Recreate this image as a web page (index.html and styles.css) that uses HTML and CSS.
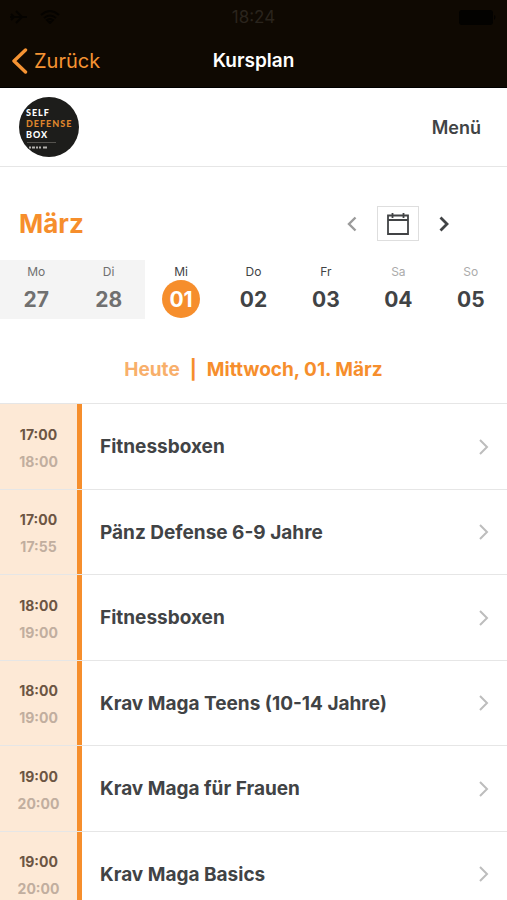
FILE: index.html
```html
<!DOCTYPE html>
<html lang="de">
<head>
<meta charset="utf-8">
<meta name="viewport" content="width=device-width, initial-scale=1">
<title>Kursplan</title>
<link rel="stylesheet" href="styles.css">
</head>
<body>
<div class="app">
  <header class="topbar">
    <div class="status">
      <div class="status-left">
        <svg width="18" height="14" viewBox="0 0 18 14" aria-hidden="true"><path d="M0 7h17M6 1l6 6-6 6M1 4l3 3-3 3" fill="none" stroke="currentColor" stroke-width="2"/></svg>
        <svg width="20" height="14" viewBox="0 0 20 14" aria-hidden="true"><path d="M1 5q9-8 18 0M4 8q6-5 12 0M10 13L7 10q3-2 6 0z" fill="none" stroke="currentColor" stroke-width="2"/></svg>
      </div>
      <span class="clock">18:24</span>
      <svg class="battery" width="38" height="15" viewBox="0 0 38 15" aria-hidden="true"><rect width="34" height="15" rx="3"/><path d="M35 5q3 2 0 5z"/></svg>
    </div>
    <nav class="navbar">
      <a class="back" href="#">
        <svg width="16" height="26" viewBox="0 0 16 26" aria-hidden="true"><path d="M13.500 2L2 13l11.500 11" fill="none" stroke="currentColor" stroke-width="3.400" stroke-linecap="round" stroke-linejoin="round"/></svg>
        <span>Zurück</span>
      </a>
      <h1 class="title">Kursplan</h1>
    </nav>
  </header>

  <div class="brandbar">
    <a href="#" aria-label="Self Defense Box">
      <svg class="logo" width="60" height="60" viewBox="0 0 60 60">
        <circle cx="30" cy="30" r="30" fill="#1d1d1b"/>
        <g font-family="Lato, sans-serif" font-weight="900" font-size="9" letter-spacing="1">
          <text x="7" y="19" fill="#fff">SELF</text>
          <text x="7" y="30" fill="#df852c">DEFENSE</text>
          <text x="7" y="41" fill="#fff">BOX</text>
        </g>
        <path d="M8 45.500h29" stroke="#55534f"/>
        <path d="M10 50.500h2m1 0h3m1 0h2m1 0h2m2 0h4" stroke="#b5b3b0" stroke-width="2"/>
      </svg>
    </a>
    <button class="menu" type="button">Menü</button>
  </div>

  <main class="schedule">
    <div class="month">
      <h2 class="month-name">März</h2>
      <div class="month-controls">
        <button class="step step-prev" type="button" aria-label="Vorherige Woche">
          <svg width="10" height="16" viewBox="0 0 10 16"><path d="M8.500 1.500L2 8l6.500 6.500" fill="none" stroke="currentColor" stroke-width="2.400"/></svg>
        </button>
        <button class="calendar" type="button" aria-label="Datum wählen">
          <svg width="22" height="24" viewBox="0 0 22 24"><path d="M1 3.500h20v18.500h-20zM1 8h20M5.500 1v5M16.500 1v5" fill="none" stroke="currentColor" stroke-width="1.800"/></svg>
        </button>
        <button class="step" type="button" aria-label="Nächste Woche">
          <svg width="10" height="16" viewBox="0 0 10 16"><path d="M1.500 1.500L8 8l-6.500 6.500" fill="none" stroke="currentColor" stroke-width="2.800"/></svg>
        </button>
      </div>
    </div>

    <div class="week">
      <button class="day past" type="button"><span class="weekday">Mo</span><span class="date">27</span></button>
      <button class="day past" type="button"><span class="weekday">Di</span><span class="date">28</span></button>
      <button class="day today" type="button"><span class="weekday">Mi</span><span class="date">01</span></button>
      <button class="day" type="button"><span class="weekday">Do</span><span class="date">02</span></button>
      <button class="day" type="button"><span class="weekday">Fr</span><span class="date">03</span></button>
      <button class="day weekend" type="button"><span class="weekday">Sa</span><span class="date">04</span></button>
      <button class="day weekend" type="button"><span class="weekday">So</span><span class="date">05</span></button>
    </div>

    <h3 class="selected"><span class="selected-today">Heute</span><span>|</span><span>Mittwoch, 01. März</span></h3>

    <ul class="courses">
      <li><a class="course" href="#"><span class="times"><span>17:00</span><span class="end">18:00</span></span><span class="name">Fitnessboxen</span><svg class="chevron" width="10" height="16" viewBox="0 0 10 16" aria-hidden="true"><path d="M1 1l7 7-7 7"/></svg></a></li>
      <li><a class="course" href="#"><span class="times"><span>17:00</span><span class="end">17:55</span></span><span class="name">Pänz Defense 6-9 Jahre</span><svg class="chevron" width="10" height="16" viewBox="0 0 10 16" aria-hidden="true"><path d="M1 1l7 7-7 7"/></svg></a></li>
      <li><a class="course" href="#"><span class="times"><span>18:00</span><span class="end">19:00</span></span><span class="name">Fitnessboxen</span><svg class="chevron" width="10" height="16" viewBox="0 0 10 16" aria-hidden="true"><path d="M1 1l7 7-7 7"/></svg></a></li>
      <li><a class="course" href="#"><span class="times"><span>18:00</span><span class="end">19:00</span></span><span class="name">Krav Maga Teens (10-14 Jahre)</span><svg class="chevron" width="10" height="16" viewBox="0 0 10 16" aria-hidden="true"><path d="M1 1l7 7-7 7"/></svg></a></li>
      <li><a class="course" href="#"><span class="times"><span>19:00</span><span class="end">20:00</span></span><span class="name">Krav Maga für Frauen</span><svg class="chevron" width="10" height="16" viewBox="0 0 10 16" aria-hidden="true"><path d="M1 1l7 7-7 7"/></svg></a></li>
      <li><a class="course" href="#"><span class="times"><span>19:00</span><span class="end">20:00</span></span><span class="name">Krav Maga Basics</span><svg class="chevron" width="10" height="16" viewBox="0 0 10 16" aria-hidden="true"><path d="M1 1l7 7-7 7"/></svg></a></li>
    </ul>
  </main>
</div>
</body>
</html>
```
FILE: styles.css
```css
:root {
  --accent: #f68e2c;
  --text: #414345;
  --line: #e6e6e6;
}

* {
  box-sizing: border-box;
}

body {
  margin: 0;
  background: #fff;
  color: var(--text);
  font-family: Inter, "Liberation Sans", sans-serif;
}

button {
  margin: 0;
  padding: 0;
  border: 0;
  background: none;
  color: inherit;
  font: inherit;
}

a {
  color: inherit;
  text-decoration: none;
}

h1,
h2,
h3 {
  margin: 0;
}

svg {
  display: block;
}

.app {
  height: 100vh;
  overflow: hidden;
}

.topbar {
  background: #0f0902;
  border-bottom: 1px solid #000;
}

.status {
  display: grid;
  grid-template-columns: 1fr auto 1fr;
  align-items: center;
  height: 34px;
  padding: 0 10px;
  color: #050300;
}

.status-left {
  display: flex;
  gap: 12px;
}

.clock {
  color: #2a241d;
  font-size: 17px;
}

.battery {
  justify-self: end;
  fill: #030200;
}

.navbar {
  display: grid;
  grid-template-columns: 1fr auto 1fr;
  align-items: center;
  height: 53px;
  padding: 0 12px;
}

.back {
  display: flex;
  align-items: center;
  gap: 6px;
  color: #f59333;
  font-size: 20px;
}

.title {
  color: #fff;
  font-size: 19px;
  font-weight: 600;
}

.brandbar {
  display: flex;
  align-items: center;
  justify-content: space-between;
  height: 79px;
  padding: 0 26px 0 19px;
  border-bottom: 1px solid var(--line);
}

.menu {
  font-size: 18px;
  font-weight: 600;
}

.month {
  display: flex;
  align-items: center;
  justify-content: space-between;
  padding: 39px 58px 19px 19px;
}

.month-name {
  color: var(--accent);
  font-size: 26px;
  font-weight: 700;
  line-height: 32px;
}

.month-controls {
  display: flex;
  align-items: center;
  gap: 20px;
}

.step-prev {
  color: #9b9b9b;
}

.calendar {
  display: grid;
  place-items: center;
  width: 42px;
  height: 35px;
  border: 1px solid #dedede;
}

.week {
  display: grid;
  grid-template-columns: repeat(7, 1fr);
}

.day {
  display: flex;
  flex-direction: column;
  align-items: center;
  height: 59px;
  padding: 4px 0 0;
}

.weekday {
  font-size: 12px;
  line-height: 16px;
}

.date {
  display: grid;
  place-items: center;
  width: 38px;
  height: 38px;
  border-radius: 50%;
  font-size: 21px;
  font-weight: 700;
}

.past {
  background: #f4f4f4;
  color: #707070;
}

.today .date {
  background: var(--accent);
  color: #fff;
}

.weekend .weekday {
  color: #ababab;
}

.selected {
  display: flex;
  justify-content: center;
  gap: 10px;
  padding: 39px 0 21px;
  color: var(--accent);
  font-size: 19px;
  font-weight: 700;
  line-height: 24px;
}

.selected-today {
  opacity: 0.7;
}

.courses {
  margin: 0;
  padding: 0;
  list-style: none;
}

.course {
  display: flex;
  align-items: center;
  height: 85px;
  padding-right: 18px;
  border-top: 1px solid var(--line);
}

li:nth-child(odd) .course {
  height: 86px;
}

.times {
  display: flex;
  flex-direction: column;
  align-items: center;
  justify-content: center;
  align-self: stretch;
  width: 82px;
  padding-top: 2px;
  border-right: 5px solid var(--accent);
  background: #fde9d6;
  color: #6c5543;
  font-size: 14px;
  font-weight: 700;
  line-height: 27px;
}

.end {
  color: #c1ae9f;
}

.name {
  flex: 1;
  padding-left: 18px;
  font-size: 19px;
  font-weight: 700;
}

.chevron {
  fill: none;
  stroke: #bdbdbd;
  stroke-width: 2;
}
```
